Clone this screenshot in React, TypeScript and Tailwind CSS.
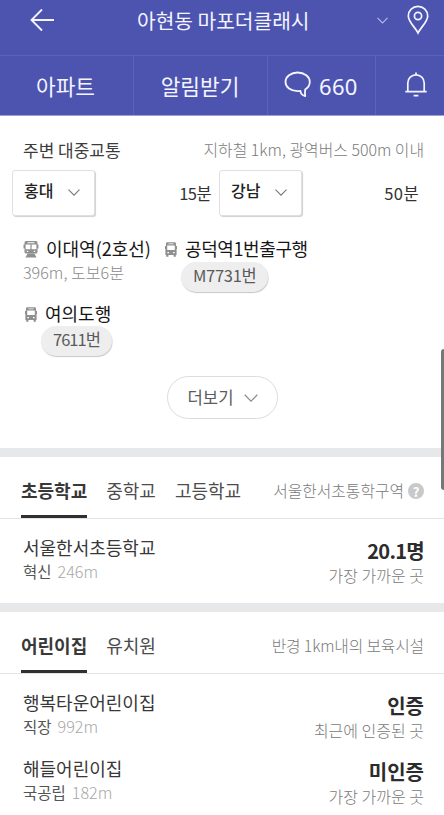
import type { ReactNode, SVGProps } from 'react';

function Chevron(props: SVGProps<SVGSVGElement>) {
  return (
    <svg viewBox="0 0 12 7" fill="none" stroke="currentColor" strokeWidth="1.1" {...props}>
      <path d="M0.5 0.7 L6 6.2 L11.5 0.7" />
    </svg>
  );
}

function BackIcon() {
  return (
    <svg width="26" height="24" viewBox="0 0 26 24" fill="none" stroke="#f4f5ff" strokeWidth="1.8">
      <path d="M13 1.5 L2.5 12 L13 22.5 M2.5 12 H25" />
    </svg>
  );
}

function PinIcon() {
  return (
    <svg width="22" height="30" viewBox="0 0 22 30" fill="none" stroke="#f4f5ff" strokeWidth="1.7">
      <path d="M11 28 C8.4 22.4 1.3 17 1.3 11 A9.7 9.7 0 0 1 20.7 11 C20.7 17 13.6 22.4 11 28 Z" />
      <circle cx="11" cy="11" r="3.6" />
    </svg>
  );
}

function ChatIcon() {
  return (
    <svg width="28" height="27" viewBox="0 0 28 27" fill="none" stroke="#f4f5ff" strokeWidth="1.8" strokeLinejoin="round">
      <path d="M21.2 25.2 C18 24.3 16.6 22.6 16.4 19.8 C15.4 20 14.6 20.1 13.6 20.1 C6.8 20.1 1.5 16.2 1.5 10.9 C1.5 5.6 6.8 1.5 13.6 1.5 C20.4 1.5 25.8 5.6 25.8 10.9 C25.8 14 24 16.6 21.2 18.4 C20.9 20.5 20.9 23 21.2 25.2 Z" />
    </svg>
  );
}

function BellIcon() {
  return (
    <svg width="22" height="25" viewBox="0 0 22 25" fill="none" stroke="#f4f5ff" strokeWidth="1.7">
      <path d="M11 0.5 V3 M2.8 19.5 V11 A8.2 8.2 0 0 1 19.2 11 V19.5 M0.3 19.6 H21.7 M8.6 23.6 H13.4" />
    </svg>
  );
}

function TrainIcon() {
  return (
    <svg className="mt-[3px] shrink-0" width="16" height="17" viewBox="0 0 16 17">
      <path
        fill="#8f8f8f"
        fillRule="evenodd"
        d="M3 0 H13 Q14.5 0 14.5 1.5 V3.5 H15.5 V7.5 H14.5 V11 Q14.5 12.5 13 12.5 H3 Q1.5 12.5 1.5 11 V7.5 H0.5 V3.5 H1.5 V1.5 Q1.5 0 3 0 Z M4.5 1.2 V2.2 H11.5 V1.2 Z M2.6 3.6 V8.2 H7.4 V3.6 Z M8.6 3.6 V8.2 H13.4 V3.6 Z M3.8 9.8 V11 H5.2 V9.8 Z M10.8 9.8 V11 H12.2 V9.8 Z"
      />
      <path fill="#8f8f8f" d="M4.6 12.5 H11.4 L13.6 16.6 H2.4 Z" />
    </svg>
  );
}

function BusIcon() {
  return (
    <svg className="mt-[3px] shrink-0" width="12" height="15" viewBox="0 0 12 15">
      <path
        fill="#8f8f8f"
        fillRule="evenodd"
        d="M2.4 0.3 H9.6 Q11 0.3 11 1.7 V4 H12 V7 H11.6 V13 H10.8 V14.8 H8.6 V13 H3.4 V14.8 H1.2 V13 H0.4 V7 H0 V4 H1 V1.7 Q1 0.3 2.4 0.3 Z M3.4 1.4 V2.3 H8.6 V1.4 Z M2.2 3.5 V8 H9.8 V3.5 Z M2.4 10 V11.3 H4 V10 Z M8 10 V11.3 H9.6 V10 Z"
      />
    </svg>
  );
}

function Select({ label }: { label: string }) {
  return (
    <button className="flex h-[46px] w-[83px] items-center rounded-[3px] border border-[#e0e0e0] bg-white pb-[3px] pl-[11px] shadow-[1px_1px_1px_#d0d0d0]">
      <span className="-mt-[3px] w-[44px] text-left text-[16px] leading-5 font-medium text-[#222]">{label}</span>
      <Chevron className="mt-px h-[7px] w-3 text-[#777]" />
    </button>
  );
}

function Pill({ children }: { children: ReactNode }) {
  return (
    <div className="flex h-[30px] w-fit items-center rounded-full bg-[#eeeeee] px-3 pb-[5px] text-[16.5px] leading-5 text-[#5a5a5a] shadow-[0.5px_1px_1px_#c6c6c6]">
      {children}
    </div>
  );
}

function Tabs({ tabs, note, help }: { tabs: string[]; note: ReactNode; help?: boolean }) {
  return (
    <div className="flex h-[62px] items-stretch border-b border-[#e4e4e4] pr-5 pl-[21px]">
      <div className="flex gap-[19px]">
        {tabs.map((tab, i) => (
          <div
            key={tab}
            className={
              i === 0
                ? 'border-b-[3px] border-[#303030] pt-[21px] text-[18px] leading-6 font-bold text-[#383838]'
                : 'pt-[21px] text-[18px] leading-6 text-[#4c4c4c]'
            }
          >
            {tab}
          </div>
        ))}
      </div>
      <div className="mt-[22px] ml-auto flex h-6 items-center gap-1 text-[15.8px] leading-6 font-light text-[#7a7a7a]">
        <span>{note}</span>
        {help && (
          <span className="flex size-4 items-center justify-center rounded-full bg-[#c9c9c9] text-[13px] leading-none font-bold text-white">
            ?
          </span>
        )}
      </div>
    </div>
  );
}

type Place = { name: string; kind: string; distance: string; value: ReactNode; desc: string };

function PlaceRow({ name, kind, distance, value, desc }: Place) {
  return (
    <div className="flex h-[66px] justify-between pr-5 pl-[23px]">
      <div>
        <div className="text-[18px] leading-6 text-[#383838]">{name}</div>
        <div className="flex gap-[6px] text-[15.5px] leading-6 text-[#555]">
          {kind}
          <span className="text-[16.2px] font-light text-[#a8a8a8]">{distance}</span>
        </div>
      </div>
      <div className="pt-1 text-right">
        <div className="text-[20px] leading-[23px] font-bold text-[#2c2c2c]">{value}</div>
        <div className="text-[16px] leading-[27px] font-light text-[#7a7a7a]">{desc}</div>
      </div>
    </div>
  );
}

export default function App() {
  return (
    <div className="relative h-[815px] w-[444px] overflow-hidden bg-white font-['Noto_Sans_CJK_KR',sans-serif] whitespace-nowrap">
      <header className="h-[116px] border-b border-[#9da2d4] bg-[#4c54b0] text-[#f4f5ff]">
        <div className="flex h-[55px] items-start pl-[29px]">
          <div className="mt-2 w-[108px]">
            <BackIcon />
          </div>
          <h1 className="mt-[5px] w-[240px] text-[20.3px] leading-[30px]">아현동 마포더클래시</h1>
          <Chevron className="mt-[17px] h-[7px] w-[11px] text-[#b8bce6]" />
          <div className="mt-[5px] ml-[19px]">
            <PinIcon />
          </div>
        </div>
        <nav className="flex h-[60px] border-t border-[#5b62b9] text-[21.4px] leading-[59px]">
          <div className="w-[134px] border-r border-[#5b62b9] pr-[2px] text-center">아파트</div>
          <div className="w-[134px] border-r border-[#5b62b9] pr-px text-center">알림받기</div>
          <div className="flex w-[108px] border-r border-[#5b62b9] pl-4">
            <div className="mt-[15px]">
              <ChatIcon />
            </div>
            <span className="ml-[7px] font-['Noto_Sans',sans-serif] text-[22px] leading-[61px] tracking-[0.3px]">660</span>
          </div>
          <div className="pt-4 pl-[29px]">
            <BellIcon />
          </div>
        </nav>
      </header>

      <section className="h-[332px]">
        <div className="flex h-[54px] items-start justify-between pt-[22px] pr-5 pl-[23px] leading-6">
          <h2 className="text-[17px] text-[#3c3c3c]">주변 대중교통</h2>
          <span className="text-[15.9px] font-light text-[#7a7a7a]">지하철 1km, 광역버스 500m 이내</span>
        </div>
        <div className="flex h-[66px] gap-2 pl-3 text-[16.5px] leading-[47px] text-[#333]">
          <div className="flex w-[199px] items-start justify-between">
            <Select label="홍대" />
            <span className="tracking-[-0.6px]">15분</span>
          </div>
          <div className="flex w-[200px] items-start justify-between">
            <Select label="강남" />
            <span className="tracking-[0.4px]">50분</span>
          </div>
        </div>
        <div className="flex h-[65px] text-[18px] leading-6 text-[#161616]">
          <div className="w-[142px] pl-[23px]">
            <div className="flex h-6 items-center gap-[7px]">
              <TrainIcon />
              이대역(2호선)
            </div>
            <div className="text-[16.1px] leading-[25px] font-light text-[#8a8a8a]">396m, 도보6분</div>
          </div>
          <div className="pl-[23px]">
            <div className="flex h-6 items-center gap-2 tracking-[-0.4px]">
              <BusIcon />
              공덕역1번출구행
            </div>
            <div className="mt-[2px] ml-4">
              <Pill>
                <span className="tracking-[-0.3px]">M7731번</span>
              </Pill>
            </div>
          </div>
        </div>
        <div className="h-[75px] pl-[25px] text-[18px] leading-6 text-[#161616]">
          <div className="flex h-6 items-center gap-2">
            <BusIcon />
            여의도행
          </div>
          <div className="mt-px ml-4">
            <Pill>
              <span className="tracking-[-1px]">7611번</span>
            </Pill>
          </div>
        </div>
        <button className="mx-auto flex h-[43px] w-[111px] items-center rounded-full border border-[#dcdcdc] pl-[20px] text-[16.7px] text-[#5c5c5c]">
          더보기
          <Chevron className="ml-[10px] h-[8px] w-[14px] text-[#8c8c8c]" />
        </button>
      </section>

      <section className="border-t-[9px] border-[#e7e8ea]">
        <Tabs tabs={['초등학교', '중학교', '고등학교']} note="서울한서초통학구역" help />
        <div className="h-[84px] pt-4">
          <PlaceRow
            name="서울한서초등학교"
            kind="혁신"
            distance="246m"
            value={<span className="tracking-[-0.7px]">20.1명</span>}
            desc="가장 가까운 곳"
          />
        </div>
      </section>

      <section className="border-t-[9px] border-[#e7e8ea]">
        <Tabs
          tabs={['어린이집', '유치원']}
          note={<span className="tracking-[-0.15px]">반경 1km내의 보육시설</span>}
        />
        <div className="pt-4">
          <PlaceRow name="행복타운어린이집" kind="직장" distance="992m" value="인증" desc="최근에 인증된 곳" />
          <PlaceRow name="해들어린이집" kind="국공립" distance="182m" value="미인증" desc="가장 가까운 곳" />
        </div>
      </section>

      <div className="absolute top-[349px] right-0 h-[141px] w-[3px] rounded-l-sm bg-[#777]" />
    </div>
  );
}
